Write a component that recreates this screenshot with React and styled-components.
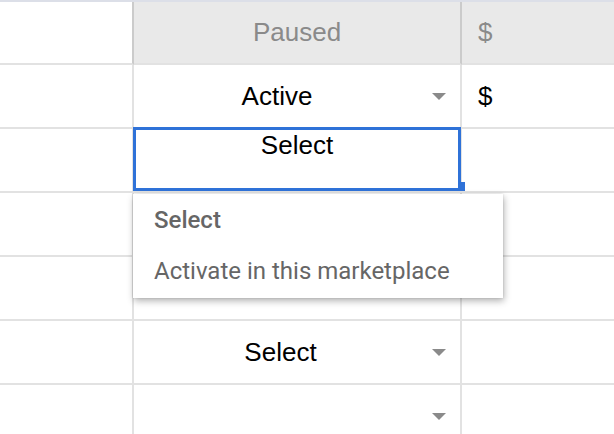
import styled, { createGlobalStyle } from "styled-components";

const Global = createGlobalStyle`
  html, body {
    margin: 0;
    padding: 0;
    background: #ffffff;
    overflow: hidden;
  }
  body {
    font-family: "Liberation Sans", Arial, sans-serif;
  }
`;

const Sheet = styled.div`
  position: relative;
  width: 614px;
  height: 434px;
  overflow: hidden;
  border-top: 2px solid #dcdfe8;
  box-sizing: border-box;
`;

const Grid = styled.div`
  display: grid;
  grid-template-columns: 134px 328px 1fr;
`;

const Cell = styled.div`
  box-sizing: border-box;
  height: ${(p) => (p.$head ? "63px" : "64px")};
  border-right: 2px solid ${(p) => (p.$head ? "#cbcbcb" : "#e2e2e2")};
  border-bottom: 2px solid #e2e2e2;
  background: ${(p) => (p.$shade ? "#e9e9e9" : "#ffffff")};
  color: ${(p) => (p.$head ? "#8a8a8a" : "#000000")};
  font-size: 26px;
  display: flex;
  align-items: center;
  justify-content: ${(p) => (p.$center ? "center" : "flex-start")};
  padding: ${(p) => (p.$money ? "0 0 0 16px" : "0")};
  &:nth-child(3n) {
    border-right: none;
  }
`;

const SelectCell = styled(Cell)`
  padding-right: 14px;
  gap: 12px;
`;

const Value = styled.span`
  flex: 1;
  text-align: center;
  padding-left: ${(p) => p.$nudge || 0}px;
`;

const Arrow = styled.span`
  width: 0;
  height: 0;
  border-left: 7px solid transparent;
  border-right: 7px solid transparent;
  border-top: 7px solid #8a8a8a;
`;

const Editor = styled.div`
  position: absolute;
  left: 133px;
  top: 125px;
  width: 328px;
  height: 64px;
  box-sizing: border-box;
  border: 3px solid #2f72d8;
  background: #ffffff;
  font-size: 26px;
  line-height: 30px;
  text-align: center;
  color: #000000;
`;

const Handle = styled.span`
  position: absolute;
  right: -7px;
  bottom: -3px;
  width: 7px;
  height: 9px;
  background: #2f72d8;
`;

const Menu = styled.div`
  position: absolute;
  left: 133px;
  top: 192px;
  width: 370px;
  padding: 0 0 2px;
  background: #ffffff;
  box-shadow: 1px 3px 7px rgba(0, 0, 0, 0.3), 0 0 2px rgba(0, 0, 0, 0.12);
  font-family: Roboto, "Liberation Sans", sans-serif;
  font-size: 24px;
  color: #666666;
`;

const Item = styled.div`
  height: 51px;
  display: flex;
  align-items: center;
  padding-left: 21px;
  font-weight: ${(p) => (p.$bold ? 500 : 400)};
`;

const rows = [
  { value: "Active", money: "$" },
  { value: "", money: "", noArrow: true },
  { value: "", money: "", noArrow: true },
  { value: "", money: "", noArrow: true },
  { value: "Select", money: "", nudge: 7 },
  { value: "", money: "" },
];

export default function App() {
  return (
    <>
      <Global />
      <Sheet>
        <Grid>
          <Cell $head />
          <Cell $head $shade $center>
            Paused
          </Cell>
          <Cell $head $shade $money>
            $
          </Cell>
          {rows.map((r, i) => [
            <Cell key={"a" + i} />,
            <SelectCell key={"b" + i}>
              <Value $nudge={r.nudge}>{r.value}</Value>
              {!r.noArrow && <Arrow />}
            </SelectCell>,
            <Cell key={"c" + i} $money>
              {r.money}
            </Cell>,
          ])}
        </Grid>
        <Editor>
          Select
          <Handle />
        </Editor>
        <Menu>
          <Item $bold>Select</Item>
          <Item>Activate in this marketplace</Item>
        </Menu>
      </Sheet>
    </>
  );
}
